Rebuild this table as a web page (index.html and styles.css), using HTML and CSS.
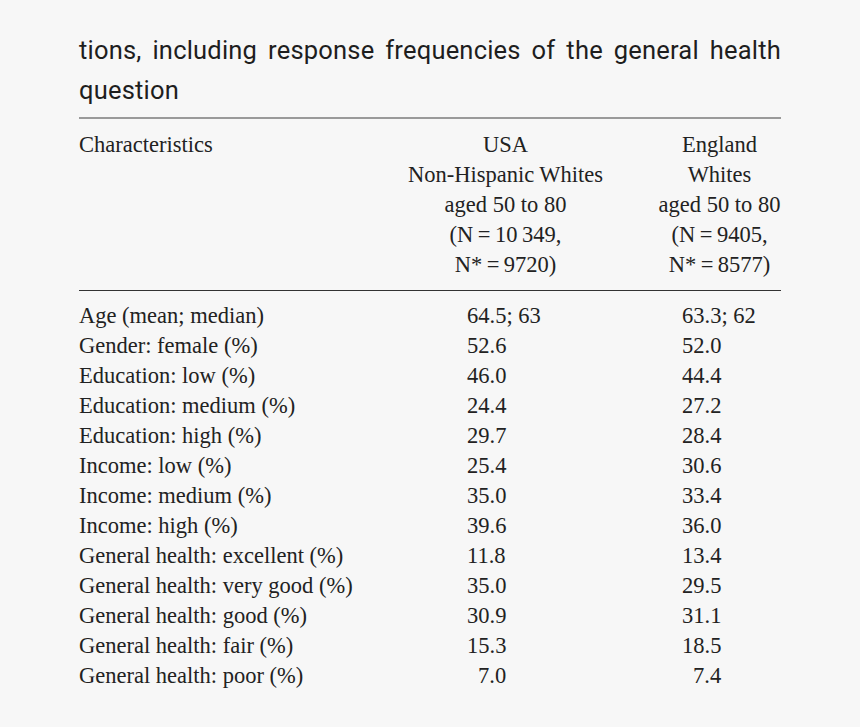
FILE: index.html
```html
<!DOCTYPE html>
<html>
<head>
<meta charset="utf-8">
<link rel="stylesheet" href="styles.css">
</head>
<body>
<div class="page">
  <p class="caption">tions, including response frequencies of the general health<br>question</p>
  <div class="table">
    <div class="head">
      <div class="c1">Characteristics</div>
      <div class="c2">USA<br>Non-Hispanic Whites<br>aged 50 to 80<br>(N&#8201;=&#8201;10&#8201;349,<br>N*&#8201;=&#8201;9720)</div>
      <div class="c3">England<br>Whites<br>aged 50 to 80<br>(N&#8201;=&#8201;9405,<br>N*&#8201;=&#8201;8577)</div>
    </div>
    <div class="body">
      <div class="c1">Age (mean; median)</div><div class="c2 v">64.5; 63</div><div class="c3 v">63.3; 62</div>
      <div class="c1">Gender: female (%)</div><div class="c2 v">52.6</div><div class="c3 v">52.0</div>
      <div class="c1">Education: low (%)</div><div class="c2 v">46.0</div><div class="c3 v">44.4</div>
      <div class="c1">Education: medium (%)</div><div class="c2 v">24.4</div><div class="c3 v">27.2</div>
      <div class="c1">Education: high (%)</div><div class="c2 v">29.7</div><div class="c3 v">28.4</div>
      <div class="c1">Income: low (%)</div><div class="c2 v">25.4</div><div class="c3 v">30.6</div>
      <div class="c1">Income: medium (%)</div><div class="c2 v">35.0</div><div class="c3 v">33.4</div>
      <div class="c1">Income: high (%)</div><div class="c2 v">39.6</div><div class="c3 v">36.0</div>
      <div class="c1">General health: excellent (%)</div><div class="c2 v">11.8</div><div class="c3 v">13.4</div>
      <div class="c1">General health: very good (%)</div><div class="c2 v">35.0</div><div class="c3 v">29.5</div>
      <div class="c1">General health: good (%)</div><div class="c2 v">30.9</div><div class="c3 v">31.1</div>
      <div class="c1">General health: fair (%)</div><div class="c2 v">15.3</div><div class="c3 v">18.5</div>
      <div class="c1">General health: poor (%)</div><div class="c2 v"><span class="pad">7.0</span></div><div class="c3 v"><span class="pad">7.4</span></div>
    </div>
  </div>
</div>
</body>
</html>
```

FILE: styles.css
```css
html, body {
  margin: 0;
  padding: 0;
  background: #f7f7f7;
}

.page {
  width: 702px;
  margin-left: 79px;
  padding-top: 31px;
  color: #222;
}

.caption {
  margin: 0;
  font-family: Roboto, "Liberation Sans", Arial, sans-serif;
  font-size: 25.5px;
  letter-spacing: 0.2px;
  line-height: 39.5px;
  text-align: justify;
  text-align-last: justify;
  color: #1e1e1e;
  padding-bottom: 7px;
  border-bottom: 2px solid #9a9a9a;
}

.table {
  font-family: "Liberation Serif", "Times New Roman", serif;
  font-size: 22.5px;
  line-height: 30px;
  color: #222;
}

.head, .body {
  display: grid;
  grid-template-columns: 1fr 197px 123px;
  column-gap: 54px;
  white-space: nowrap;
}

.head {
  padding: 11px 0 10px;
  border-bottom: 1px solid #333;
}

.body {
  padding-top: 10px;
}

.head .c2, .head .c3 {
  text-align: center;
}

.body .c2 {
  padding-left: 60px;
}

.body .c3 {
  padding-left: 24px;
}

.pad {
  padding-left: 11px;
}
```
